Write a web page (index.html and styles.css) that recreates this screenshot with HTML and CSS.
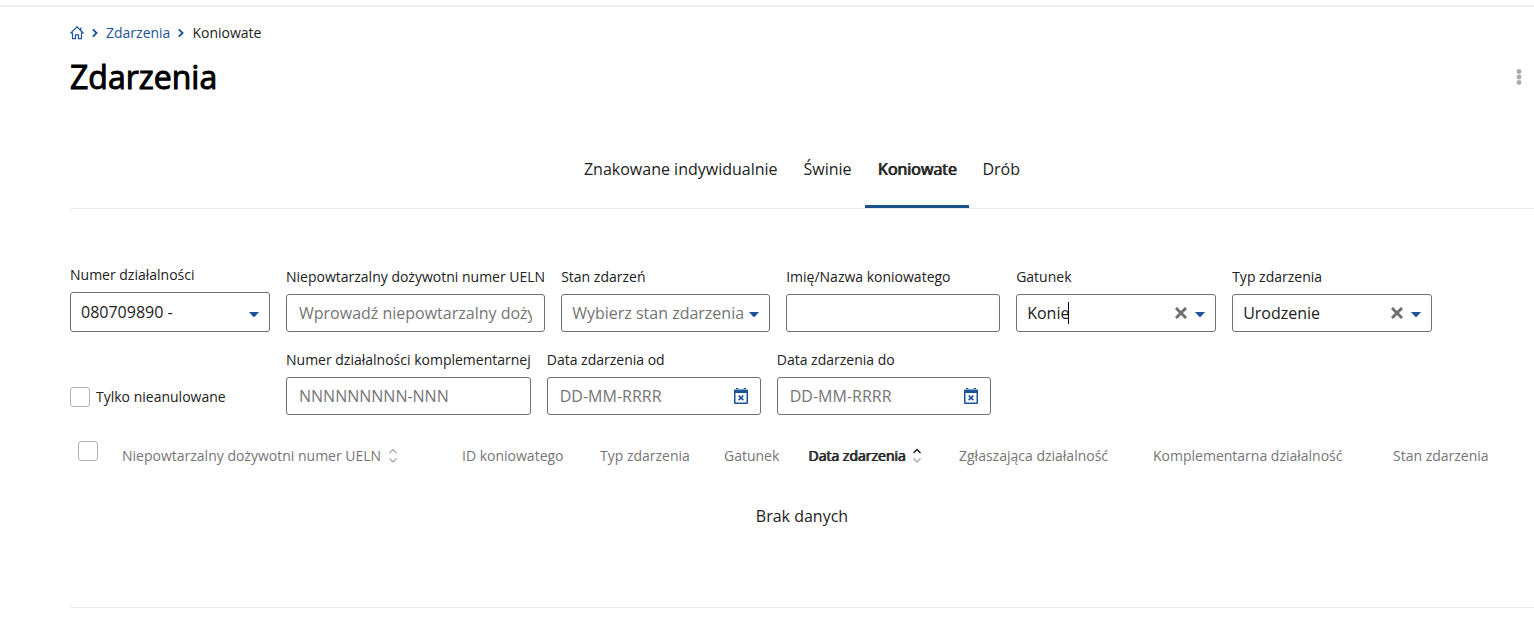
FILE: index.html
```html
<!DOCTYPE html>
<html lang="pl">
<head>
<meta charset="utf-8">
<title>Zdarzenia – Koniowate</title>
<link rel="stylesheet" href="styles.css">
</head>
<body>
<svg class="sprite" aria-hidden="true">
  <symbol id="caret" viewBox="0 0 10 5"><path d="M0 0h10L6 4.500Q5 5.400 4 4.500z" fill="currentColor"/></symbol>
  <symbol id="chevron" viewBox="0 0 6 10"><path d="M.8 1.300 4.600 5 .8 8.700" fill="none" stroke="currentColor" stroke-width="1.800"/></symbol>
  <symbol id="cross" viewBox="0 0 12 12"><path d="M2 2l8 8M10 2l-8 8" fill="none" stroke="currentColor" stroke-width="3" stroke-linecap="square"/></symbol>
  <symbol id="calendar" viewBox="0 0 16 16"><path d="M2 1.500h12a1 1 0 0 1 1 1V15a1 1 0 0 1-1 1H2a1 1 0 0 1-1-1V2.500a1 1 0 0 1 1-1zM2.500 5v9.500h11V5zM3 0h2.500v2H3zM10.500 0H13v2h-2.500z" fill="currentColor" fill-rule="evenodd"/><path d="M5.700 7.500l4.600 4.600M10.300 7.500l-4.600 4.600" stroke="currentColor" stroke-width="1.700"/></symbol>
</svg>
<main class="page">
  <nav class="breadcrumb" aria-label="Ścieżka">
    <a href="#" aria-label="Strona główna"><svg class="home" viewBox="0 0 14 14"><path d="M2.500 7H.8L7 .8 13.200 7h-1.700M2.500 6.500v6.200h3V8.800h3v3.900h3V6.500M10.800 4V1.500" fill="none" stroke="currentColor" stroke-width="1.200"/></svg></a>
    <svg class="chevron"><use href="#chevron"/></svg>
    <a href="#">Zdarzenia</a>
    <svg class="chevron"><use href="#chevron"/></svg>
    <span>Koniowate</span>
  </nav>
  <header class="title-bar">
    <h1 class="title">Zdarzenia</h1>
    <button class="menu-button" type="button" aria-label="Więcej"><svg class="dots" viewBox="0 0 6 16"><circle cx="3" cy="2.500" r="2.400"/><circle cx="3" cy="8" r="2.400"/><circle cx="3" cy="13.500" r="2.400"/></svg></button>
  </header>
  <nav class="tabs">
    <a class="tab" href="#">Znakowane indywidualnie</a>
    <a class="tab" href="#">Świnie</a>
    <a class="tab tab-active" href="#" aria-current="page">Koniowate</a>
    <a class="tab" href="#">Drób</a>
  </nav>
  <form class="filters">
    <div class="field field-medium">
      <label for="numer">Numer działalności</label>
      <div class="control">
        <select id="numer" class="box box-tall"><option>080709890 -</option></select>
        <svg class="caret"><use href="#caret"/></svg>
      </div>
    </div>
    <div class="field">
      <label for="ueln">Niepowtarzalny dożywotni numer UELN</label>
      <input id="ueln" class="box box-text" type="text" placeholder="Wprowadź niepowtarzalny dożywotni numer">
    </div>
    <div class="field field-state">
      <label for="stan">Stan zdarzeń</label>
      <div class="control">
        <select id="stan" class="box box-empty"><option>Wybierz stan zdarzenia</option></select>
        <svg class="caret"><use href="#caret"/></svg>
      </div>
    </div>
    <div class="field field-wide">
      <label for="imie">Imię/Nazwa koniowatego</label>
      <input id="imie" class="box box-text" type="text">
    </div>
    <div class="field field-medium">
      <label for="gatunek">Gatunek</label>
      <div class="control">
        <input id="gatunek" class="box" type="text" role="combobox" aria-expanded="false" value="Konie">
        <span class="text-cursor"></span>
        <button class="clear" type="button" aria-label="Wyczyść"><svg class="cross"><use href="#cross"/></svg></button>
        <svg class="caret"><use href="#caret"/></svg>
      </div>
    </div>
    <div class="field field-medium">
      <label for="typ">Typ zdarzenia</label>
      <div class="control">
        <select id="typ" class="box"><option>Urodzenie</option></select>
        <button class="clear" type="button" aria-label="Wyczyść"><svg class="cross"><use href="#cross"/></svg></button>
        <svg class="caret"><use href="#caret"/></svg>
      </div>
    </div>
    <div class="check-field field-medium">
      <input id="tylko" class="check" type="checkbox">
      <label for="tylko">Tylko nieanulowane</label>
    </div>
    <div class="field">
      <label for="kompl">Numer działalności komplementarnej</label>
      <input id="kompl" class="box box-text" type="text" placeholder="NNNNNNNNN-NNN">
    </div>
    <div class="field field-wide">
      <label for="od">Data zdarzenia od</label>
      <div class="control">
        <input id="od" class="box box-text" type="text" placeholder="DD-MM-RRRR">
        <button class="date-button" type="button" aria-label="Kalendarz"><svg class="calendar"><use href="#calendar"/></svg></button>
      </div>
    </div>
    <div class="field field-wide">
      <label for="do">Data zdarzenia do</label>
      <div class="control">
        <input id="do" class="box box-text" type="text" placeholder="DD-MM-RRRR">
        <button class="date-button" type="button" aria-label="Kalendarz"><svg class="calendar"><use href="#calendar"/></svg></button>
      </div>
    </div>
  </form>
  <table class="events">
    <colgroup><col class="c-check"><col class="c-ueln"><col class="c-id"><col class="c-type"><col class="c-species"><col class="c-date"><col class="c-reporter"><col class="c-compl"><col class="c-state"></colgroup>
    <thead>
      <tr>
        <th class="check-cell"><input class="check" type="checkbox" aria-label="Zaznacz wszystkie"></th>
        <th><span class="sortable">Niepowtarzalny dożywotni numer UELN <svg class="sort" viewBox="0 0 10 16"><path d="M1.500 5 5 1.500 8.500 5M1.500 10.500 5 14l3.500-3.500"/></svg></span></th>
        <th>ID koniowatego</th>
        <th>Typ zdarzenia</th>
        <th>Gatunek</th>
        <th class="sorted" aria-sort="ascending"><span class="sortable">Data zdarzenia <svg class="sort" viewBox="0 0 10 16"><path class="sort-on" d="M1.500 5 5 1.500 8.500 5"/><path d="M1.500 10.500 5 14l3.500-3.500"/></svg></span></th>
        <th>Zgłaszająca działalność</th>
        <th>Komplementarna działalność</th>
        <th>Stan zdarzenia</th>
      </tr>
    </thead>
    <tbody>
      <tr><td class="empty" colspan="9">Brak danych</td></tr>
    </tbody>
  </table>
</main>
</body>
</html>
```
FILE: styles.css
```css
* { box-sizing: border-box; }
body {
  margin: 0;
  padding-top: 5px;
  background: #fff;
  color: #212121;
  font-family: "Open Sans", "Noto Sans", sans-serif;
  font-size: 14px;
  line-height: 20px;
}
a { color: #1b5299; text-decoration: none; }
button { border: 0; padding: 0; background: none; display: flex; }
svg { display: block; flex: none; }
.sprite { position: absolute; width: 0; height: 0; }

.page {
  border-top: 2px solid #efefef;
  padding: 16px 0 0 70px;
}
.breadcrumb { display: flex; align-items: center; gap: 8px; }
.home { width: 14px; height: 14px; }
.chevron { width: 6px; height: 10px; color: #1b5299; }

.title-bar {
  display: flex;
  align-items: center;
  justify-content: space-between;
  margin-top: 14px;
  padding-right: 12px;
}
.title {
  margin: 0;
  color: #000;
  font-size: 32px;
  font-weight: 400;
  line-height: 40px;
  -webkit-text-stroke: 1px #000;
}
.dots { width: 6px; height: 16px; fill: #aaa; }

.tabs {
  display: flex;
  justify-content: center;
  margin-top: 36px;
  border-bottom: 1px solid #ececec;
}
.tab {
  padding: 24px 13px;
  border-bottom: 3px solid transparent;
  color: #212121;
  font-size: 16px;
  line-height: 24px;
}
.tab-active {
  border-color: #1b4f8a;
  border-radius: 2px 2px 0 0;
  text-shadow: 1px 0 #212121;
}

.filters {
  display: flex;
  flex-wrap: wrap;
  align-items: flex-end;
  gap: 18px 16px;
  margin-top: 56px;
}
.field { display: flex; flex-direction: column; gap: 7px; }
.field-medium { width: 200px; }
.field-state { width: 209px; }
.field-wide { width: 214px; }
.control { position: relative; }
.box {
  appearance: none;
  display: block;
  width: 100%;
  min-width: 0;
  height: 38px;
  margin: 0;
  padding: 0 10px;
  border: 1px solid #707070;
  border-radius: 3px;
  background: #fff;
  color: #212121;
  font: inherit;
  font-size: 16px;
  outline: 0;
}
.box-tall { height: 40px; }
.box-text { padding: 0 12px; }
.box-empty, .box::placeholder { color: #757575; opacity: 1; }
.field > .box-text { width: 0; min-width: 100%; }
.caret {
  position: absolute;
  right: 11px;
  bottom: 15px;
  width: 10px;
  height: 5px;
  color: #1b5299;
  pointer-events: none;
}
.clear {
  position: absolute;
  right: 29px;
  top: 13px;
  color: #707070;
}
.cross { width: 12px; height: 12px; }
.text-cursor {
  position: absolute;
  left: 52px;
  top: 8px;
  width: 1px;
  height: 22px;
  background: #000;
}
.date-button {
  position: absolute;
  right: 12px;
  top: 11px;
  color: #1b5299;
}
.calendar { width: 16px; height: 16px; }

.check-field {
  display: flex;
  align-items: center;
  gap: 6px;
  padding-bottom: 8px;
}
.check {
  appearance: none;
  display: block;
  width: 20px;
  height: 20px;
  margin: 0;
  border: 1px solid #b3b3b3;
  border-radius: 3px;
  background: #fff;
}

.events {
  width: 100%;
  margin-top: 16px;
  border-collapse: collapse;
  border-bottom: 1px solid #ececec;
  table-layout: fixed;
}
.events th {
  padding: 15px 8px 10px;
  color: #757575;
  font-weight: 400;
  text-align: left;
  vertical-align: top;
  white-space: nowrap;
}
.events .check-cell { padding-top: 10px; }
.events .sorted { color: #212121; text-shadow: 1px 0 #212121; }
.sortable { display: flex; align-items: center; gap: 7px; }
.sort {
  width: 10px;
  height: 16px;
  fill: none;
  stroke: #a0a0a0;
  stroke-width: 1.2;
}
.sort-on { stroke: #212121; stroke-width: 1.5; }
.c-check { width: 44px; }
.c-ueln { width: 340px; }
.c-id { width: 138px; }
.c-type { width: 124px; }
.c-species { width: 84px; }
.c-date { width: 151px; }
.c-reporter { width: 194px; }
.c-compl { width: 240px; }
.c-state { width: 149px; }
.empty {
  padding: 28px 8px 79px;
  font-size: 16px;
  line-height: 24px;
  text-align: center;
}
```
